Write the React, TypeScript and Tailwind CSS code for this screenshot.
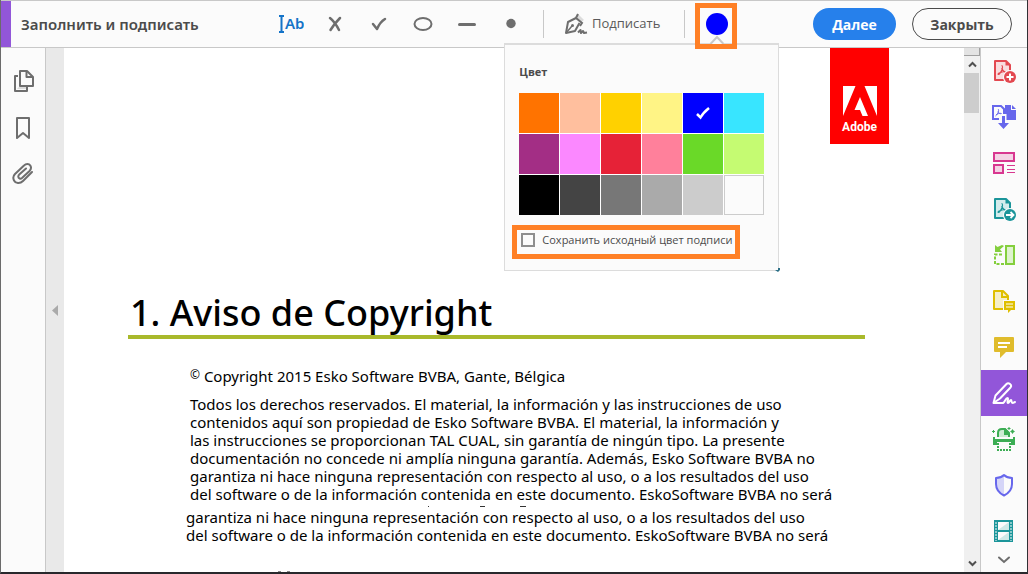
import React, { useState } from 'react';

interface Swatch {
  name: string;
  className: string;
}

const swatches: Swatch[] = [
  { name: 'Оранжевый', className: 'bg-[#ff7300]' },
  { name: 'Персиковый', className: 'bg-[#ffbf9e]' },
  { name: 'Жёлтый', className: 'bg-[#ffd100]' },
  { name: 'Светло-жёлтый', className: 'bg-[#fff485]' },
  { name: 'Синий', className: 'bg-[#0000ff]' },
  { name: 'Голубой', className: 'bg-[#38e5ff]' },
  { name: 'Фиолетовый', className: 'bg-[#a32e85]' },
  { name: 'Розовый', className: 'bg-[#fb88ff]' },
  { name: 'Красный', className: 'bg-[#e62237]' },
  { name: 'Светло-красный', className: 'bg-[#ff809b]' },
  { name: 'Зелёный', className: 'bg-[#6ad928]' },
  { name: 'Салатовый', className: 'bg-[#c5fb72]' },
  { name: 'Чёрный', className: 'bg-black' },
  { name: 'Тёмно-серый', className: 'bg-[#444444]' },
  { name: 'Серый', className: 'bg-[#777777]' },
  { name: 'Средне-серый', className: 'bg-[#aaaaaa]' },
  { name: 'Светло-серый', className: 'bg-[#cccccc]' },
  { name: 'Белый', className: 'bg-[#fbfbfb] border border-[#cccccc]' },
];

function Icon({ children }: { children: React.ReactNode }) {
  return (
    <svg width="24" height="24" viewBox="0 0 24 24" fill="none" aria-hidden="true">
      {children}
    </svg>
  );
}

// Page with the Acrobat mark, shared by the create and export tools
function PdfPage({ color, tint, children }: { color: string; tint: string; children: React.ReactNode }) {
  return (
    <Icon>
      <path d="M3 2H14L18 6V21H3Z" fill={tint} stroke={color} strokeWidth="2" strokeLinejoin="round" />
      <path d="M13.5 1.5V6.5H18.5Z" fill={color} />
      <path
        d="M9.5 6.5C11 6.5 10.5 9 10 10.5C9 13 7.5 15.5 6.5 15.5C5 15.5 7.5 12.8 13.5 12.5M9.7 9C10.2 11 12 13 14 14"
        stroke={color}
        strokeWidth="1.2"
      />
      <circle cx="18" cy="18" r="7" fill="#fbfbfb" />
      <circle cx="18" cy="18" r="6" fill={color} />
      {children}
    </Icon>
  );
}

function CreatePdfIcon() {
  return (
    <PdfPage color="#e34850" tint="#f9dcde">
      <path d="M18 14.5V21.5M14.5 18H21.5" stroke="#fff" strokeWidth="2" />
    </PdfPage>
  );
}

function CombineIcon() {
  return (
    <Icon>
      <path d="M13 0H19V5H24V15H13Z" fill="#6767ec" />
      <path d="M20 0L24 4H20Z" fill="#6767ec" />
      <path d="M7 14H1V1H9L12 4V10" stroke="#6767ec" strokeWidth="2" />
      <path
        d="M6 4C7.5 5 6 9 3.5 11M6 6.5C6.5 8 8 9 9.5 9M4 10C5.5 8.5 8 8 9.5 8.5"
        stroke="#6767ec"
        strokeWidth="1"
      />
      <path d="M8.5 9H14.5V16H18L11.5 23L5 16H8.5Z" fill="#fbfbfb" />
      <path d="M10 11H13V18H17L11.5 24L6 18H10Z" fill="#6767ec" />
    </Icon>
  );
}

function OrganizeIcon() {
  return (
    <Icon>
      <g stroke="#d83790" strokeWidth="2">
        <rect x="2" y="2" width="20" height="8" fill="#f4d3e5" />
        <rect x="2" y="14" width="9" height="8" fill="#f4d3e5" />
      </g>
      <path d="M15 14.5H23M15 18.5H23M15 21.5H23" stroke="#d83790" strokeWidth="1" />
    </Icon>
  );
}

function ExportPdfIcon() {
  return (
    <PdfPage color="#1b959a" tint="#d3ecec">
      <path d="M14 18H21M18.5 15L21.5 18L18.5 21" stroke="#fff" strokeWidth="1.8" />
    </PdfPage>
  );
}

function CompareIcon() {
  return (
    <Icon>
      <rect x="14" y="3" width="8" height="18" fill="#dff3cf" stroke="#84cf3d" strokeWidth="2" />
      <path d="M10 11.5H3V21H12" stroke="#84cf3d" strokeWidth="2" strokeDasharray="3 1.5" />
      <path d="M3 2L5.5 4L10 2L12 3L8 6.5L10 9H3Z" fill="#84cf3d" />
    </Icon>
  );
}

function NotePageIcon() {
  return (
    <Icon>
      <path d="M11 20H2V2H11L16 7V12" fill="#f5efc9" stroke="#dfbf00" strokeWidth="2" strokeLinejoin="round" />
      <path d="M10 2V8H16" stroke="#dfbf00" strokeWidth="2" />
      <path d="M11 11H24V22H20L16 25V22H11Z" fill="#fbfbfb" />
      <path d="M12 12H23V21H19L16 24V21H12Z" fill="#dfbf00" />
      <path d="M14 15H21M14 18H21" stroke="#fff" strokeWidth="1" />
    </Icon>
  );
}

function CommentIcon() {
  return (
    <Icon>
      <path d="M3 2H21Q22 2 22 3V16Q22 17 21 17H14L8 23V17H3Q2 17 2 16V3Q2 2 3 2Z" fill="#e0bc2c" />
      <path d="M6 8H18M6 12H15" stroke="#fff" strokeWidth="2" />
    </Icon>
  );
}

function FillSignIcon() {
  return (
    <Icon>
      <path
        d="M1.5 22L3.5 14.5L14.5 3C16.5 1 20.5 4 18.5 6.5L8 17.5L1.5 22H11C13 21 13.5 17 15.5 17C17 17 14.5 22 16 22C17.5 22 17.5 19 19 19C20 19 19 22 20.5 22C21.5 22 22 21.5 23 21"
        stroke="#fff"
        strokeWidth="2"
        strokeLinecap="round"
        strokeLinejoin="round"
      />
    </Icon>
  );
}

function ScanIcon() {
  return (
    <Icon>
      <path d="M6 10V6Q6 2 10 2H13L17 6V10" fill="#cdebd3" stroke="#3cad54" strokeWidth="2" />
      <path d="M12 1V8H18L17 5L13 1Z" fill="#3cad54" />
      <path d="M1 10H3V12H21V10H23V18H19V15H5V18H1Z" fill="#3cad54" />
      <path d="M6 16V23H18V16" stroke="#3cad54" strokeWidth="2" strokeDasharray="2 1" />
      <path d="M1.5 3V6M0 4.5H3M17 0V3M15.5 1.5H18.5" stroke="#3cad54" strokeWidth="1" />
      <path d="M20.5 2L21.5 3.5L23 4.5L21.5 5.5L20.5 7L19.5 5.5L18 4.5L19.5 3.5Z" fill="#3cad54" />
    </Icon>
  );
}

function ShieldIcon() {
  return (
    <Icon>
      <path d="M12 2L4 5V12C4 17 8 21 12 23Z" fill="#d5d5f8" />
      <path
        d="M12 2Q9 5 4 5V11C4 17 8 20.5 12 22.5C16 20.5 20 17 20 11V5Q15 5 12 2Z"
        stroke="#6767ec"
        strokeWidth="2"
        strokeLinejoin="round"
      />
    </Icon>
  );
}

function MediaIcon() {
  return (
    <Icon>
      <rect x="2" y="1" width="19" height="22" fill="#1b959a" />
      <path d="M6 3H17V11H6ZM6 13H17V21H6Z" fill="#fbfbfb" />
      <path d="M17 3V11H6ZM17 13V21H6Z" fill="#cde9e7" />
      <path d="M4 3V22M19 3V22" stroke="#fbfbfb" strokeWidth="1" strokeDasharray="2 1" />
    </Icon>
  );
}

const tools = [
  { label: 'Создать PDF', icon: <CreatePdfIcon /> },
  { label: 'Объединить файлы', icon: <CombineIcon /> },
  { label: 'Систематизировать страницы', icon: <OrganizeIcon /> },
  { label: 'Экспорт PDF', icon: <ExportPdfIcon /> },
  { label: 'Сравнить файлы', icon: <CompareIcon /> },
  { label: 'Отправить на рецензию', icon: <NotePageIcon /> },
  { label: 'Комментарий', icon: <CommentIcon /> },
  { label: 'Заполнить и подписать', icon: <FillSignIcon />, active: true },
  { label: 'Сканирование', icon: <ScanIcon /> },
  { label: 'Защитить', icon: <ShieldIcon /> },
  { label: 'Мультимедиа', icon: <MediaIcon /> },
];

const marks = [
  {
    label: 'Добавить текст',
    icon: (
      <svg width="26" height="20" viewBox="0 0 26 20" aria-hidden="true">
        <path d="M1 2H6M1 18H6M3.5 2V18" stroke="#1473c8" strokeWidth="2" fill="none" />
        <text x="7" y="15" fill="#1473c8" fontFamily="Noto Sans, sans-serif" fontSize="15" fontWeight="600">
          Ab
        </text>
      </svg>
    ),
  },
  {
    label: 'Крестик',
    icon: (
      <Icon>
        <path d="M7 6Q12 10 16 18M17 6Q11 12 7.5 18" stroke="#6e6e6e" strokeWidth="2.5" strokeLinecap="round" />
      </Icon>
    ),
  },
  {
    label: 'Галочка',
    icon: (
      <Icon>
        <path d="M6 12L10 17Q13 10 18 7" stroke="#6e6e6e" strokeWidth="2.5" strokeLinecap="round" strokeLinejoin="round" />
      </Icon>
    ),
  },
  {
    label: 'Овал',
    icon: (
      <Icon>
        <ellipse cx="12" cy="12" rx="8.5" ry="6" stroke="#6e6e6e" strokeWidth="2" />
      </Icon>
    ),
  },
  {
    label: 'Линия',
    icon: (
      <Icon>
        <path d="M4.5 12.5H19.5" stroke="#6e6e6e" strokeWidth="3" strokeLinecap="round" />
      </Icon>
    ),
  },
  {
    label: 'Точка',
    icon: (
      <Icon>
        <circle cx="12" cy="11.5" r="4.7" fill="#6e6e6e" />
      </Icon>
    ),
  },
];

function ColorPanel({ selected, onSelect }: { selected: string; onSelect: (name: string) => void }) {
  const [keepOriginal, setKeepOriginal] = useState(false);

  return (
    <div className="absolute top-[44px] left-[-191px] w-[275px] border border-t-2 border-[#dcdcdc] bg-[#fbfbfb] pb-[11px]">
      <h2 className="px-[14px] pt-[19px] text-[11px] leading-4 font-bold text-[#4b4b4b]">Цвет</h2>
      <div className="mt-[13px] ml-[14px] grid w-[245px] grid-cols-6 gap-px bg-white">
        {swatches.map((swatch) => (
          <button
            key={swatch.name}
            type="button"
            aria-label={swatch.name}
            onClick={() => onSelect(swatch.name)}
            className={`flex h-10 items-center justify-center ${swatch.className}`}
          >
            {selected === swatch.name && (
              <svg width="16" height="14" viewBox="0 0 16 14" fill="none" aria-hidden="true">
                <path d="M2 8L5.5 11.5Q8 7 14 2" stroke="#fff" strokeWidth="2.5" />
              </svg>
            )}
          </button>
        ))}
      </div>
      <label className="mt-[10px] ml-[7px] flex h-[34px] w-[228px] items-center gap-[7px] border-[5px] border-[#ff8026] pb-1 pl-1 text-[11px] text-[#4b4b4b]">
        <input
          type="checkbox"
          checked={keepOriginal}
          onChange={(e) => setKeepOriginal(e.target.checked)}
          className="h-[14px] w-[14px] shrink-0 appearance-none border-2 border-[#8e8e8e] bg-[#fbfbfb] checked:bg-[#1473e6]"
        />
        <span className="leading-4 whitespace-nowrap">Сохранить исходный цвет подписи</span>
      </label>
      <svg width="5" height="4" viewBox="0 0 5 4" className="absolute -right-0.5 -bottom-0.5" aria-hidden="true">
        <path d="M0 2H3V0H5V2L3 4Z" fill="#2b6f86" />
      </svg>
    </div>
  );
}

function Toolbar() {
  const [selected, setSelected] = useState('Синий');

  return (
    <header className="flex h-12 shrink-0 items-center border-y border-[#c8c8c8] bg-[#fbfbfb]">
      <div className="w-[10px] self-stretch bg-[#9256d9]" />
      <h1 className="w-[258px] shrink-0 pl-[10px] font-['Noto_Sans','Open_Sans',sans-serif] text-[15px] font-semibold whitespace-nowrap text-[#4b4b4b]">
        Заполнить и подписать
      </h1>

      <div className="flex shrink-0 items-center">
        {marks.map((mark) => (
          <button key={mark.label} type="button" aria-label={mark.label} className="flex w-11 justify-center">
            {mark.icon}
          </button>
        ))}
      </div>

      <div className="ml-[10px] h-7 w-px shrink-0 bg-[#c8c8c8]" />
      <button type="button" className="ml-5 flex shrink-0 items-center gap-1 text-[13px] text-[#5a5a5a]">
        <svg width="24" height="24" viewBox="0 0 24 24" fill="none" stroke="#6e6e6e" aria-hidden="true">
          <path d="M14 2L20 8L17 10L11 5Z" fill="#dcdcdc" stroke="none" />
          <path d="M14 2L12 6L18 11L16 14" strokeWidth="2" />
          <path d="M12 6L4 10L2 21L11 19L15.5 11" strokeWidth="2" strokeLinejoin="round" />
          <path d="M2 21L8 14" strokeWidth="1.5" />
          <circle cx="8.5" cy="13.5" r="1.5" fill="#6e6e6e" stroke="none" />
          <path d="M14 20.5L16.5 18L17 21L19 19L20 21L23 20.5" strokeWidth="2" strokeLinejoin="round" />
        </svg>
        Подписать
      </button>
      <div className="ml-6 h-7 w-px shrink-0 bg-[#c8c8c8]" />

      <div className="relative z-10 ml-[10px] shrink-0">
        <ColorPanel selected={selected} onSelect={setSelected} />
        <button
          type="button"
          aria-label="Цвет подписи"
          className="relative mt-1 flex h-[46px] w-[42px] flex-col items-center border-[5px] border-[#ff8026] pt-[5px]"
        >
          <svg width="32" height="31" viewBox="0 0 32 31" className="shrink-0" aria-hidden="true">
            <circle cx="17" cy="11" r="11" fill="#0000ff" />
            <path d="M10.5 31L17 24L23.5 31" fill="#fbfbfb" stroke="#c8c8c8" strokeWidth="2" />
          </svg>
        </button>
      </div>

      <div className="mr-[15px] ml-auto flex shrink-0 items-center gap-4 text-[14px] font-bold">
        <button type="button" className="h-8 w-[83px] rounded-full bg-[#2680eb] text-white">
          Далее
        </button>
        <button type="button" className="h-8 w-[100px] rounded-full border border-[#4b4b4b] text-[#4b4b4b]">
          Закрыть
        </button>
      </div>
    </header>
  );
}

function LeftRail() {
  return (
    <nav className="flex w-[45px] shrink-0 flex-col items-center border-r border-[#c8c8c8] bg-[#fbfbfb] pt-[10px] pl-[2px]">
      <button type="button" aria-label="Миниатюры страниц" className="flex h-[46px] items-center">
        <Icon>
          <path d="M8 17H15V20H5Z" fill="#dcdcdc" />
          <g stroke="#6e6e6e" strokeWidth="2" strokeLinejoin="round">
            <path d="M6 7H3V22H15V18" />
            <path d="M8 2H15L21 8V17H8Z" />
            <path d="M14.5 2V8H21" />
          </g>
        </Icon>
      </button>
      <button type="button" aria-label="Закладки" className="flex h-[46px] items-center">
        <Icon>
          <path d="M5 3H17V23L11 18L5 23Z" stroke="#6e6e6e" strokeWidth="2" strokeLinejoin="round" />
        </Icon>
      </button>
      <button type="button" aria-label="Вложения" className="flex h-[46px] items-center">
        <Icon>
          <path
            d="M20 11L11 20C8 23 3.5 22.5 2 19.5C0.8 17 1.5 14.5 3 13L12 4.5C14 2.5 17 2.5 18.3 4.5C19.5 6.5 19 8.5 17.5 10L10 17C8.5 18.3 6.5 17.5 6.3 15.8C6.2 14.8 6.7 14 7.5 13.3L14 7.5"
            stroke="#6e6e6e"
            strokeWidth="2"
            strokeLinecap="round"
          />
        </Icon>
      </button>
    </nav>
  );
}

function DocumentPage() {
  return (
    <main className="flex min-w-0 flex-1 flex-col overflow-hidden bg-white font-['Noto_Sans','Open_Sans',sans-serif]">
      <div className="mr-[75px] flex justify-end">
        <div className="flex h-24 w-[59px] flex-col items-center bg-[#ff0000] pt-[38px]">
          <svg width="34" height="30" viewBox="0 0 34 30" fill="#fff" className="shrink-0" aria-hidden="true">
            <path d="M0 0H12.5L0 30ZM21.5 0H34V30ZM17 11L25 30H19.5L17 24H11.5Z" />
          </svg>
          <span className="font-[Roboto,sans-serif] text-[12px] leading-[22px] font-bold text-white">Adobe</span>
        </div>
      </div>

      <div className="mt-[147px] mr-[99px] ml-16 border-b-4 border-[#a9b92b]">
        <h2 className="pl-[2px] text-[36px] leading-[44px] font-medium whitespace-nowrap text-black">
          1. Aviso de Copyright
        </h2>
      </div>

      <div className="mt-[28px] ml-[126px] text-[15px] leading-[18px] whitespace-nowrap text-black">
        <p>
          <span className="relative top-[-3px] text-[12px]">©</span> Copyright 2015 Esko Software BVBA, Gante, Bélgica
        </p>
        <p className="mt-2">
          Todos los derechos reservados. El material, la información y las instrucciones de uso
          <br />
          contenidos aquí son propiedad de Esko Software BVBA. El material, la información y
          <br />
          las instrucciones se proporcionan TAL CUAL, sin garantía de ningún tipo. La presente
          <br />
          documentación no concede ni amplía ninguna garantía. Además, Esko Software BVBA no
          <br />
          garantiza ni hace ninguna representación con respecto al uso, o a los resultados del uso
          <br />
          del software o de la información contenida en este documento. EskoSoftware BVBA no será
        </p>
        {/* tops of the line hidden under the next paragraph */}
        <svg width="360" height="5" viewBox="0 0 360 5" aria-hidden="true">
          <path d="M238 3.5H239M290 3.5H295M330 3.5H336" stroke="#333" strokeWidth="1" />
        </svg>
        <p className="-ml-1">
          garantiza ni hace ninguna representación con respecto al uso, o a los resultados del uso
          <br />
          del software o de la información contenida en este documento. EskoSoftware BVBA no será
        </p>
      </div>
      <svg width="120" height="1" viewBox="0 0 120 1" className="mt-auto ml-[160px] shrink-0" aria-hidden="true">
        <path d="M54 0.5H57M63 0.5H66" stroke="#888" strokeWidth="1" />
      </svg>
    </main>
  );
}

function Scrollbar() {
  return (
    <div className="flex w-4 shrink-0 flex-col items-center bg-[#f0f0f0]">
      <div className="h-2 w-full border-r border-b border-[#a0a0a0] bg-[#e3e3e3]" />
      <button type="button" aria-label="Прокрутить вверх" className="flex h-[17px] w-full items-center justify-center">
        <svg width="9" height="7" viewBox="0 0 9 7" fill="none" aria-hidden="true">
          <path d="M1 5.5L4.5 2L8 5.5" stroke="#505050" strokeWidth="2" />
        </svg>
      </button>
      <div className="mr-px h-10 w-[15px] bg-[#cdcdcd]" />
      <button type="button" aria-label="Прокрутить вниз" className="mt-auto flex h-[17px] w-full items-center justify-center">
        <svg width="9" height="7" viewBox="0 0 9 7" fill="none" aria-hidden="true">
          <path d="M1 1.5L4.5 5L8 1.5" stroke="#505050" strokeWidth="2" />
        </svg>
      </button>
    </div>
  );
}

function ToolsRail() {
  return (
    <nav className="flex w-[47px] shrink-0 flex-col border-l border-[#c8c8c8] bg-[#fbfbfb]">
      {tools.map((tool) => (
        <button
          key={tool.label}
          type="button"
          aria-label={tool.label}
          className={`flex h-[46px] shrink-0 items-center justify-center ${tool.active ? 'bg-[#9256d9]' : ''}`}
        >
          {tool.icon}
        </button>
      ))}
      <button type="button" aria-label="Ещё инструменты" className="flex flex-1 justify-center pt-[2px]">
        <svg width="14" height="8" viewBox="0 0 14 8" fill="none" aria-hidden="true">
          <path d="M2 1.5L7 6L12 1.5" stroke="#6e6e6e" strokeWidth="2" strokeLinecap="round" />
        </svg>
      </button>
    </nav>
  );
}

export default function App() {
  return (
    <div className="flex h-screen flex-col overflow-hidden border-r border-b-2 border-l border-r-[#303034] border-b-[#28282c] border-l-[#6b6b6b] bg-white font-['Open_Sans','Noto_Sans',sans-serif]">
      <Toolbar />
      <div className="flex min-h-0 flex-1">
        <LeftRail />
        <button
          type="button"
          aria-label="Показать панель навигации"
          className="flex w-[18px] shrink-0 items-center justify-center bg-[#e9e9e9]"
        >
          <svg width="6" height="11" viewBox="0 0 6 11" fill="#aaaaaa" aria-hidden="true">
            <path d="M6 0V11L0 5.5Z" />
          </svg>
        </button>
        <DocumentPage />
        <Scrollbar />
        <ToolsRail />
      </div>
    </div>
  );
}
